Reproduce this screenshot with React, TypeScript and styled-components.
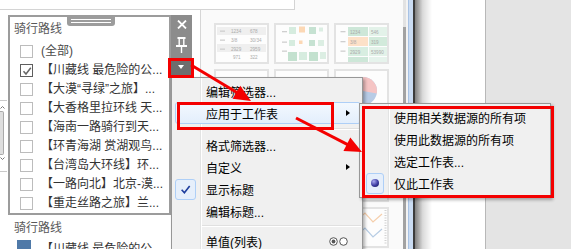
import React from "react";
import styled, { createGlobalStyle } from "styled-components";

const GlobalStyle = createGlobalStyle`
  html, body {
    margin: 0;
    padding: 0;
  }
  body {
    background: #fff;
    font-family: "Liberation Sans", "Noto Sans CJK SC", sans-serif;
    font-size: 12px;
    color: #222;
  }
`;

const Screen = styled.div`
  position: relative;
  width: 571px;
  height: 249px;
  overflow: hidden;
  display: flex;
`;

/* ---------- sheet area (left part) ---------- */

const SheetArea = styled.div`
  width: 403px;
  flex: none;
  display: flex;
  flex-direction: column;
`;

const TabStrip = styled.div`
  height: 10px;
  flex: none;
  display: flex;
  background: #fafafa;
`;

const TabEdge = styled.div`
  width: 295px;
  background: #fff;
  border-bottom: 1px solid #d4d4d4;
  border-right: 1px solid #d4d4d4;
  box-sizing: border-box;
`;

const SheetBody = styled.div`
  flex: 1;
  display: flex;
  min-height: 0;
`;

const LeftPane = styled.div`
  width: 200px;
  flex: none;
  display: flex;
  background: #fff;
`;

const EdgeStrip = styled.div`
  width: 8px;
  flex: none;
  padding-top: 90px;
`;

const EdgeScroll = styled.div`
  width: 7px;
  height: 72px;
  box-sizing: border-box;
  border-top: 1px solid #c9c9c9;
  border-bottom: 1px solid #c9c9c9;
  display: flex;
  flex-direction: column;
  align-items: flex-start;
  padding-top: 5px;
`;

const EdgeThumb = styled.div`
  width: 4px;
  height: 44px;
  margin: 2px 0;
  box-sizing: border-box;
  background: #dedede;
  border: 1px solid #a9a9a9;
  border-left: none;
  border-radius: 0 2px 2px 0;
`;

const PaneColumn = styled.div`
  display: flex;
  flex-direction: column;
  padding-top: 5px;
`;

const FilterCard = styled.div`
  position: relative;
  width: 163px;
  height: 205px;
  box-sizing: border-box;
  border: 2px solid #9c9c9c;
  background: #fff;
`;

const DragTab = styled.div`
  position: absolute;
  left: 57px;
  top: -2px;
  width: 48px;
  height: 11px;
  background: #9c9c9c;
  border-radius: 0 0 3px 3px;
  display: flex;
  flex-direction: column;
  align-items: center;
  justify-content: center;
  gap: 2px;
`;

const DragLine = styled.div`
  width: 40px;
  height: 1px;
  background: #fff;
`;

const Toolbar = styled.div`
  position: absolute;
  left: 161px;
  top: -2px;
  width: 21px;
  height: 60px;
  background: #8c8c8c;
  display: flex;
  flex-direction: column;
  align-items: center;
`;

const ToolButton = styled.div<{ $h: number; $dark?: boolean }>`
  width: 100%;
  height: ${(p) => p.$h}px;
  display: flex;
  align-items: center;
  justify-content: center;
  background: ${(p) => (p.$dark ? "#6e6e6e" : "transparent")};
`;

const DropTriangle = styled.div`
  width: 0;
  height: 0;
  margin-right: 2px;
  border-left: 3.5px solid transparent;
  border-right: 3.5px solid transparent;
  border-top: 4px solid #fff;
`;

const CardTitle = styled.div`
  height: 24px;
  line-height: 24px;
  padding-left: 4px;
  color: #595959;
  font-size: 12px;
`;

const OptionList = styled.div`
  padding-top: 1px;
  display: flex;
  flex-direction: column;
`;

const OptionRow = styled.div`
  height: 19px;
  display: flex;
  align-items: center;
  padding-left: 10px;
  gap: 8px;
  white-space: nowrap;
  overflow: hidden;
`;

const Checkbox = styled.div<{ $checked?: boolean }>`
  width: 13px;
  height: 13px;
  flex: none;
  box-sizing: border-box;
  border: 1px solid ${(p) => (p.$checked ? "#5e5e5e" : "#bcbcbc")};
  background: #fff;
  display: flex;
  align-items: center;
  justify-content: center;
`;

const OptionText = styled.span<{ $muted?: boolean }>`
  color: ${(p) => (p.$muted ? "#4a4a4a" : "#333")};
  font-size: 12px;
  line-height: 19px;
`;

const LegendTitle = styled.div`
  height: 24px;
  line-height: 24px;
  padding-left: 6px;
  margin-top: 0.5px;
  color: #595959;
  font-size: 12px;
`;

const LegendRow = styled.div`
  display: flex;
  align-items: flex-start;
  gap: 10px;
  padding-left: 9px;
`;

const Swatch = styled.div`
  width: 14px;
  height: 14px;
  flex: none;
  background: #4f79a8;
`;

const Canvas = styled.div`
  flex: 1;
  border-left: 1px solid #d6d6d6;
  background: #fafafa;
  padding: 13px 0 0 13px;
  display: grid;
  grid-template-columns: repeat(3, 55px);
  grid-auto-rows: 41px;
  gap: 5px;
  align-content: start;
`;

const Thumb = styled.div`
  box-sizing: border-box;
  border: 2px solid #e3e3e3;
  background: #fdfdfd;
  overflow: hidden;
`;

/* ---------- right side panes ---------- */

const Splitter = styled.div`
  width: 29px;
  flex: none;
  display: flex;
  background: #fff;
`;

const SplitScroll = styled.div`
  width: 3px;
  background: linear-gradient(to bottom, #e2e2e2 27px, #a2a2a2 27px);
`;

const SplitGap = styled.div`
  width: 2px;
  background: #f3f3f3;
`;

const SplitBlue = styled.div`
  width: 5px;
  box-sizing: border-box;
  border-left: 1px solid #a8c2e4;
  background: #cadcf3;
`;

const SplitDark = styled.div`
  width: 2px;
  background: #3c3c3c;
`;

const SplitShadow = styled.div`
  flex: 1;
  background: linear-gradient(to right, rgba(0, 0, 0, 0.5), rgba(0, 0, 0, 0.15) 45%, rgba(0, 0, 0, 0));
`;

const WhitePane = styled.div`
  width: 54px;
  flex: none;
  box-sizing: border-box;
  background: #fff;
  border-right: 1px solid #b8b8b8;
`;

const GrayPane = styled.div`
  flex: 1;
  background: #e4e4e4;
`;

/* ---------- context menus ---------- */

const MenuBox = styled.div<{ $x: number; $y: number; $w: number; $h?: number; $z: number }>`
  position: absolute;
  left: ${(p) => p.$x}px;
  top: ${(p) => p.$y}px;
  width: ${(p) => p.$w}px;
  ${(p) => (p.$h ? `height: ${p.$h}px;` : "")}
  z-index: ${(p) => p.$z};
  box-sizing: border-box;
  border: 1px solid #979797;
  padding: 2px 0;
  background: linear-gradient(
    to right,
    #f0f0f0 28px,
    #e2e3e3 28px,
    #e2e3e3 29px,
    #ffffff 29px,
    #ffffff 30px,
    #f0f0f0 30px
  );
  box-shadow: 2px 2px 3px rgba(0, 0, 0, 0.3);
`;

const MenuItem = styled.div<{ $hot?: boolean }>`
  height: 22px;
  margin: 0 1px 0 3px;
  box-sizing: border-box;
  display: flex;
  align-items: center;
  border: 1px solid ${(p) => (p.$hot ? "#aecff7" : "transparent")};
  border-radius: 3px;
  background: ${(p) => (p.$hot ? "linear-gradient(#f3f8fe, #e3eefc)" : "transparent")};
  color: #000;
  font-size: 12px;
  white-space: nowrap;
`;

const Gutter = styled.div`
  width: 30px;
  height: 100%;
  flex: none;
  display: flex;
  align-items: center;
`;

const Indicator = styled.div<{ $offset: number; $w: number }>`
  margin-left: ${(p) => p.$offset}px;
  width: ${(p) => p.$w}px;
  height: 21px;
  box-sizing: border-box;
  border: 1px solid #aecff7;
  border-radius: 3px;
  background: #e6effb;
  display: flex;
  align-items: center;
  justify-content: center;
`;

const RadioDot = styled.div`
  width: 8px;
  height: 8px;
  border-radius: 50%;
  background: radial-gradient(circle at 35% 30%, #a8a8f0, #3a3aa0 55%, #15154f);
`;

const ItemLabel = styled.span`
  flex: 1;
`;

const SubArrow = styled.div`
  width: 0;
  height: 0;
  margin-right: 10px;
  border-top: 3.5px solid transparent;
  border-bottom: 3.5px solid transparent;
  border-left: 4px solid #000;
`;

const Trailing = styled.div`
  margin-right: 12px;
  display: flex;
  align-items: center;
`;

const Separator = styled.div<{ $h: number }>`
  height: ${(p) => p.$h}px;
  margin-left: 30px;
  margin-right: 1px;
  display: flex;
  flex-direction: column;
  justify-content: center;

  &::before {
    content: "";
    height: 1px;
    background: #e0e0e0;
  }
  &::after {
    content: "";
    height: 1px;
    background: #ffffff;
  }
`;

/* ---------- annotations ---------- */

const RedBox = styled.div<{ $x: number; $y: number; $w: number; $h: number }>`
  position: absolute;
  left: ${(p) => p.$x}px;
  top: ${(p) => p.$y}px;
  width: ${(p) => p.$w}px;
  height: ${(p) => p.$h}px;
  box-sizing: border-box;
  border: 3px solid #f40000;
  z-index: 20;
  pointer-events: none;
`;

const ArrowLayer = styled.svg`
  position: absolute;
  left: 0;
  top: 0;
  z-index: 21;
  pointer-events: none;
`;

/* ---------- drawings ---------- */

const CloseIcon = () => (
  <svg width="10" height="9" viewBox="0 0 10 9">
    <path d="M1 0.5 L9 8.5 M9 0.5 L1 8.5" stroke="#fff" strokeWidth="1.8" />
  </svg>
);

const PinIcon = () => (
  <svg width="11" height="16" viewBox="0 0 11 16">
    <rect x="1.5" y="0" width="8" height="2" fill="#fff" />
    <path d="M3.2 2 V8 M7.8 2 V8" stroke="#fff" strokeWidth="1.4" />
    <rect x="0" y="8" width="11" height="2" fill="#fff" />
    <path d="M5.5 10 V16" stroke="#fff" strokeWidth="1.4" />
  </svg>
);

const TickMark = ({ color, size }: { color: string; size: number }) => (
  <svg width={size} height={size} viewBox="0 0 10 10">
    <path d="M1.5 5.2 L4 8 L8.8 1.8" stroke={color} strokeWidth="1.5" fill="none" />
  </svg>
);

const Chevron = ({ up }: { up?: boolean }) => (
  <svg width="5" height="3" viewBox="0 0 5 3">
    <path d={up ? "M0.5 2.5 L2.5 0.5 L4.5 2.5" : "M0.5 0.5 L2.5 2.5 L4.5 0.5"} stroke="#777" fill="none" />
  </svg>
);

const RadioPair = () => (
  <svg width="19" height="9" viewBox="0 0 19 9">
    <circle cx="4.5" cy="4.5" r="3.8" stroke="#555" fill="#fff" />
    <circle cx="4.5" cy="4.5" r="1.9" fill="#555" />
    <circle cx="14.5" cy="4.5" r="3.8" stroke="#555" fill="#fff" />
  </svg>
);

const tiny = { fontSize: 4.6, fill: "#ababab", fontFamily: "Liberation Sans, sans-serif" };

function ThumbArt({ kind }: { kind: string }) {
  if (kind === "table") {
    return (
      <svg width="51" height="37" viewBox="0 0 51 37">
        <rect x="1" y="2" width="49" height="8" fill="#efefef" />
        <rect x="1" y="19" width="49" height="8" fill="#efefef" />
        <rect x="4" y="5.5" width="5" height="1.3" fill="#cfcfcf" />
        <rect x="4" y="14.5" width="5" height="1.3" fill="#cfcfcf" />
        <rect x="4" y="23.5" width="5" height="1.3" fill="#cfcfcf" />
        <text x="15" y="8" style={tiny}>1234</text>
        <text x="34" y="8" style={tiny}>678</text>
        <text x="15" y="17" style={tiny}>3/8</text>
        <text x="34" y="17" style={tiny}>30/34</text>
        <text x="15" y="25.5" style={tiny}>2929</text>
        <text x="34" y="25.5" style={tiny}>2959</text>
        <text x="17" y="34" style={tiny}>971</text>
        <text x="34" y="34" style={tiny}>322</text>
      </svg>
    );
  }
  if (kind === "heat") {
    return (
      <svg width="51" height="37" viewBox="0 0 51 37">
        <rect x="6" y="6" width="5" height="1.3" fill="#cfcfcf" />
        <rect x="6" y="16.5" width="5" height="1.3" fill="#cfcfcf" />
        <rect x="6" y="25.5" width="5" height="1.3" fill="#cfcfcf" />
        <rect x="13" y="2" width="7" height="7" fill="#d6ecdf" />
        <rect x="23" y="1.5" width="6" height="6" fill="#fcd8b5" />
        <rect x="33" y="2" width="7" height="7" fill="#c6e2d2" />
        <rect x="43" y="2.5" width="4" height="4" fill="#dceee3" />
        <rect x="13" y="15" width="6" height="6" fill="#d6ecdf" />
        <rect x="23" y="15.5" width="3.5" height="3.5" fill="#fcd8b5" />
        <rect x="33" y="15" width="6" height="6" fill="#c6e2d2" />
        <rect x="42" y="15" width="6" height="6" fill="#dceee3" />
        <rect x="12" y="27" width="9" height="9" fill="#c3e1cf" />
        <rect x="23" y="27" width="8" height="8" fill="#d6ecdf" />
        <rect x="33" y="27" width="9" height="9" fill="#c3e1cf" />
        <rect x="44" y="27" width="6" height="7" fill="#dceee3" />
      </svg>
    );
  }
  if (kind === "hl") {
    return (
      <svg width="51" height="37" viewBox="0 0 51 37">
        <rect x="4.5" y="6" width="5" height="1.3" fill="#cfcfcf" />
        <rect x="4.5" y="16" width="5" height="1.3" fill="#cfcfcf" />
        <rect x="4.5" y="25.5" width="5" height="1.3" fill="#cfcfcf" />
        <rect x="12" y="2" width="20" height="9" fill="#cde7d8" />
        <rect x="12" y="12" width="20" height="9" fill="#fde1c8" />
        <rect x="12" y="22" width="20" height="9" fill="#d8eee1" />
        <rect x="12" y="32" width="20" height="5" fill="#cde7d8" />
        <rect x="33" y="2" width="18" height="9" fill="#e3f2e9" />
        <rect x="33" y="12" width="18" height="9" fill="#d2eadb" />
        <rect x="33" y="22" width="18" height="9" fill="#e3f2e9" />
        <rect x="33" y="32" width="18" height="5" fill="#e6f3ec" />
        <text x="14" y="8.5" style={tiny}>1234</text>
        <text x="35" y="8.5" style={tiny}>546</text>
        <text x="14" y="18.5" style={tiny}>3/8</text>
        <text x="35" y="18.5" style={tiny}>319</text>
        <text x="14" y="28.5" style={tiny}>2929</text>
        <text x="35" y="28.5" style={tiny}>53990</text>
      </svg>
    );
  }
  if (kind === "pie") {
    return (
      <svg width="51" height="37" viewBox="0 0 51 37">
        <circle cx="27" cy="20" r="14" fill="#b7cbe5" />
        <path d="M27 20 L27 6 A14 14 0 0 1 40.8 22.4 Z" fill="#f5c4c4" />
        <path d="M27 20 L13 20 A14 14 0 0 1 27 6 Z" fill="#e9e2d6" />
      </svg>
    );
  }
  if (kind === "line") {
    return (
      <svg width="51" height="37" viewBox="0 0 51 37">
        <polyline points="2,10 11,4 20,12 29,4 37,13 46,5" fill="none" stroke="#f6cfac" strokeWidth="1.2" />
        <polyline points="2,25 11,19 20,27 29,19 37,28 46,20" fill="none" stroke="#b6cce4" strokeWidth="1.2" />
        <path d="M49.5 1 V36" stroke="#d2d2d2" strokeWidth="2" strokeDasharray="1 1.5" />
      </svg>
    );
  }
  return null;
}

/* ---------- data ---------- */

const options = [
  { label: "(全部)", muted: true },
  { label: "【川藏线 最危险的公...", checked: true },
  { label: "【大漠“寻绿”之旅】..." },
  { label: "【大香格里拉环线 天..." },
  { label: "【海南一路骑行到天..." },
  { label: "【环青海湖 赏湖观鸟..." },
  { label: "【台湾岛大环线】环..." },
  { label: "【一路向北】北京-漠..." },
  { label: "【重走丝路之旅】兰..." },
];

const thumbs = [
  "table", "heat", "hl",
  "", "", "pie",
  "", "", "",
  "", "", "",
  "", "", "line",
];

const arrows = [
  { x1: 191, y1: 65, x2: 251, y2: 101 },
  { x1: 296, y1: 118, x2: 362, y2: 152 },
];

function arrowGeometry(a: { x1: number; y1: number; x2: number; y2: number }) {
  const dx = a.x2 - a.x1;
  const dy = a.y2 - a.y1;
  const len = Math.hypot(dx, dy);
  const ux = dx / len;
  const uy = dy / len;
  const L = 17;
  const W = 7.5;
  const bx = a.x2 - ux * L;
  const by = a.y2 - uy * L;
  return {
    bx: bx + ux * 2,
    by: by + uy * 2,
    head: `${a.x2},${a.y2} ${bx - uy * W},${by + ux * W} ${bx + uy * W},${by - ux * W}`,
  };
}

export default function App() {
  return (
    <>
      <GlobalStyle />
      <Screen>
        <SheetArea>
          <TabStrip>
            <TabEdge />
          </TabStrip>
          <SheetBody>
            <LeftPane>
              <EdgeStrip>
                <EdgeScroll>
                  <Chevron up />
                  <EdgeThumb />
                  <Chevron />
                </EdgeScroll>
              </EdgeStrip>
              <PaneColumn>
                <FilterCard>
                  <DragTab>
                    <DragLine />
                    <DragLine />
                  </DragTab>
                  <Toolbar>
                    <ToolButton $h={19}>
                      <CloseIcon />
                    </ToolButton>
                    <ToolButton $h={21}>
                      <PinIcon />
                    </ToolButton>
                    <ToolButton $h={4} />
                    <ToolButton $h={16} $dark>
                      <DropTriangle />
                    </ToolButton>
                  </Toolbar>
                  <CardTitle>骑行路线</CardTitle>
                  <OptionList>
                    {options.map((o) => (
                      <OptionRow key={o.label}>
                        <Checkbox $checked={o.checked}>
                          {o.checked && <TickMark color="#666" size={10} />}
                        </Checkbox>
                        <OptionText $muted={o.muted}>{o.label}</OptionText>
                      </OptionRow>
                    ))}
                  </OptionList>
                </FilterCard>
                <LegendTitle>骑行路线</LegendTitle>
                <LegendRow>
                  <Swatch />
                  <OptionText>【川藏线 最危险的公...</OptionText>
                </LegendRow>
              </PaneColumn>
            </LeftPane>
            <Canvas>
              {thumbs.map((k, i) => (
                <Thumb key={i}>
                  <ThumbArt kind={k} />
                </Thumb>
              ))}
            </Canvas>
          </SheetBody>
        </SheetArea>

        <Splitter>
          <SplitScroll />
          <SplitGap />
          <SplitBlue />
          <SplitDark />
          <SplitShadow />
        </Splitter>
        <WhitePane />
        <GrayPane />

        <MenuBox $x={171} $y={77} $w={192} $z={5}>
          <MenuItem>
            <Gutter />
            <ItemLabel>编辑筛选器...</ItemLabel>
          </MenuItem>
          <MenuItem $hot>
            <Gutter />
            <ItemLabel>应用于工作表</ItemLabel>
            <SubArrow />
          </MenuItem>
          <Separator $h={10} />
          <MenuItem>
            <Gutter />
            <ItemLabel>格式筛选器...</ItemLabel>
          </MenuItem>
          <MenuItem>
            <Gutter />
            <ItemLabel>自定义</ItemLabel>
            <SubArrow />
          </MenuItem>
          <MenuItem>
            <Gutter>
              <Indicator $offset={-1} $w={21}>
                <TickMark color="#1f3e9e" size={11} />
              </Indicator>
            </Gutter>
            <ItemLabel>显示标题</ItemLabel>
          </MenuItem>
          <MenuItem>
            <Gutter />
            <ItemLabel>编辑标题...</ItemLabel>
          </MenuItem>
          <Separator $h={8} />
          <MenuItem>
            <Gutter />
            <ItemLabel>单值(列表)</ItemLabel>
            <Trailing>
              <RadioPair />
            </Trailing>
          </MenuItem>
        </MenuBox>

        <MenuBox $x={359} $y={103} $w={192} $h={95} $z={6}>
          <MenuItem>
            <Gutter />
            <ItemLabel>使用相关数据源的所有项</ItemLabel>
          </MenuItem>
          <MenuItem>
            <Gutter />
            <ItemLabel>使用此数据源的所有项</ItemLabel>
          </MenuItem>
          <MenuItem>
            <Gutter />
            <ItemLabel>选定工作表...</ItemLabel>
          </MenuItem>
          <MenuItem>
            <Gutter>
              <Indicator $offset={2} $w={18}>
                <RadioDot />
              </Indicator>
            </Gutter>
            <ItemLabel>仅此工作表</ItemLabel>
          </MenuItem>
        </MenuBox>

        <RedBox $x={168} $y={58} $w={26} $h={20} />
        <RedBox $x={177} $y={102} $w={157} $h={28} />
        <RedBox $x={362} $y={106} $w={192} $h={92} />

        <ArrowLayer width="571" height="249" viewBox="0 0 571 249">
          {arrows.map((a, i) => {
            const g = arrowGeometry(a);
            return (
              <g key={i}>
                <line x1={a.x1} y1={a.y1} x2={g.bx} y2={g.by} stroke="#f40000" strokeWidth="3" />
                <polygon points={g.head} fill="#f40000" />
              </g>
            );
          })}
        </ArrowLayer>
      </Screen>
    </>
  );
}
